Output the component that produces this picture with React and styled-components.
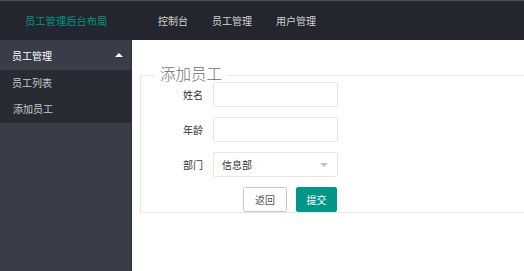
import styled, { createGlobalStyle } from "styled-components";

const GlobalStyle = createGlobalStyle`
  html, body {
    margin: 0;
    padding: 0;
    height: 100%;
    overflow: hidden;
    background: #fff;
    font-family: "Noto Sans CJK SC", "Noto Sans", sans-serif;
  }
  #root {
    height: 100%;
  }
`;

const Page = styled.div`
  display: flex;
  flex-direction: column;
  height: 100%;
`;

const Header = styled.div`
  height: 39px;
  border-top: 1px solid #4b4e56;
  background: #23262e;
  display: flex;
  align-items: center;
  flex-shrink: 0;
`;

const Logo = styled.div`
  width: 132px;
  padding-left: 25px;
  box-sizing: border-box;
  color: #009688;
  font-size: 10.3px;
  line-height: 39px;
`;

const Nav = styled.ul`
  display: flex;
  list-style: none;
  margin: 0 0 0 14px;
  padding: 0;
`;

const NavItem = styled.li`
  padding: 0 12px;
  color: #d2d2d2;
  font-size: 10px;
  line-height: 39px;
`;

const Body = styled.div`
  flex: 1;
  display: flex;
  min-height: 0;
`;

const Side = styled.div`
  width: 131px;
  border-right: 1px solid #2f323c;
  background: #393d49;
  flex-shrink: 0;
`;

const MenuHead = styled.div`
  height: 30px;
  padding: 0 8px 0 12px;
  display: flex;
  align-items: center;
  justify-content: space-between;
  color: #fff;
  font-size: 10px;
`;

const Arrow = styled.span`
  width: 0;
  height: 0;
  border-left: 4px solid transparent;
  border-right: 4px solid transparent;
  border-bottom: 4px solid #fff;
`;

const SubMenu = styled.div`
  background: #282b33;
  padding-bottom: 1px;
`;

const SubItem = styled.div`
  height: 26px;
  line-height: 26px;
  padding-left: ${(p) => p.$indent || 12}px;
  color: rgba(255, 255, 255, 0.75);
  font-size: 10px;
`;

const Main = styled.div`
  flex: 1;
  padding: 28px 0 0 8px;
  margin-right: -20px;
`;

const Fieldset = styled.fieldset`
  margin: 0;
  padding: 0;
  border: 1px solid #e6e6e6;
  min-width: 0;
`;

const Legend = styled.legend`
  margin-left: 14px;
  padding: 0 5px;
  font-family: "Liberation Serif", "Noto Sans CJK SC", serif;
  font-weight: 300;
  font-size: 15.5px;
  line-height: 14px;
  color: #6f6f6f;
`;

const Row = styled.div`
  display: flex;
  align-items: center;
  height: 25px;
  margin-bottom: 10px;
`;

const Label = styled.label`
  width: 72px;
  padding-right: 10px;
  box-sizing: border-box;
  text-align: right;
  font-size: 10px;
  color: #333;
`;

const Input = styled.input`
  width: 125px;
  height: 25px;
  box-sizing: border-box;
  border: 1px solid #e6e6e6;
  border-radius: 2px;
  outline: none;
  padding: 0 8px;
  font-size: 10px;
`;

const Select = styled.div`
  width: 125px;
  height: 25px;
  box-sizing: border-box;
  border: 1px solid #e6e6e6;
  border-radius: 2px;
  padding: 0 8px;
  display: flex;
  align-items: center;
  justify-content: space-between;
  font-size: 10px;
  color: #333;
`;

const Caret = styled.span`
  width: 0;
  height: 0;
  border-left: 4px solid transparent;
  border-right: 4px solid transparent;
  border-top: 4px solid #c2c2c2;
  margin-right: 1px;
`;

const Actions = styled.div`
  display: flex;
  gap: 9px;
  padding-left: 102px;
  height: 25px;
`;

const Button = styled.button`
  height: 25px;
  width: ${(p) => p.$w}px;
  padding: 0;
  border-radius: 2px;
  font-family: inherit;
  font-size: 10px;
  cursor: pointer;
  border: 1px solid ${(p) => (p.$primary ? "#009688" : "#c9c9c9")};
  background: ${(p) => (p.$primary ? "#009688" : "#fff")};
  color: ${(p) => (p.$primary ? "#fff" : "#555")};
`;

export default function App() {
  return (
    <Page>
      <GlobalStyle />
      <Header>
        <Logo>员工管理后台布局</Logo>
        <Nav>
          <NavItem>控制台</NavItem>
          <NavItem>员工管理</NavItem>
          <NavItem>用户管理</NavItem>
        </Nav>
      </Header>
      <Body>
        <Side>
          <MenuHead>
            员工管理
            <Arrow />
          </MenuHead>
          <SubMenu>
            <SubItem>员工列表</SubItem>
            <SubItem $indent={13}>添加员工</SubItem>
          </SubMenu>
        </Side>
        <Main>
          <Fieldset>
            <Legend>添加员工</Legend>
            <Row>
              <Label>姓名</Label>
              <Input />
            </Row>
            <Row>
              <Label>年龄</Label>
              <Input />
            </Row>
            <Row>
              <Label>部门</Label>
              <Select>
                信息部
                <Caret />
              </Select>
            </Row>
            <Actions>
              <Button $w={44}>返回</Button>
              <Button $w={41} $primary>
                提交
              </Button>
            </Actions>
          </Fieldset>
        </Main>
      </Body>
    </Page>
  );
}
